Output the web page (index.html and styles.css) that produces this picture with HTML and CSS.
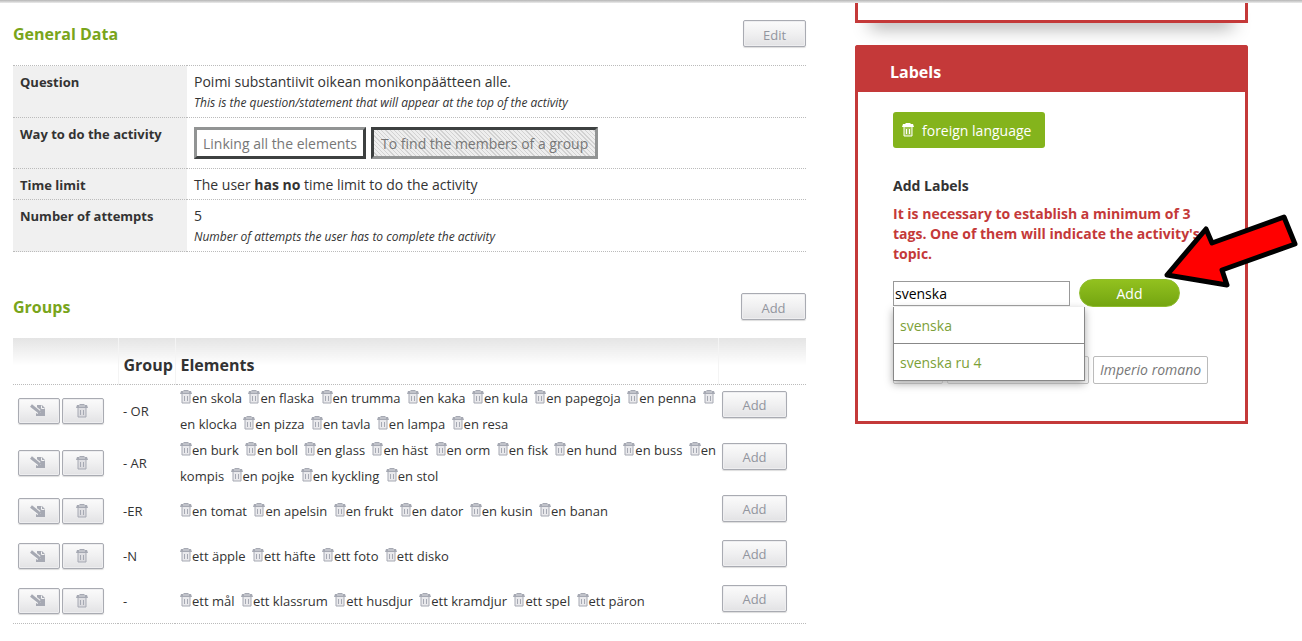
FILE: index.html
```html
<!DOCTYPE html>
<html lang="en">
<head>
  <meta charset="UTF-8">
  <meta name="viewport" content="width=device-width, initial-scale=1.0">
  <title>Activity - General Data</title>
  <link rel="stylesheet" href="styles.css">
</head>
<body>
  <!-- shared icons -->
  <svg class="sprite" aria-hidden="true">
    <symbol id="trash" viewBox="0 0 12 14">
      <path d="M2 4h8v9H2z" fill="currentColor" fill-opacity=".25"/>
      <path d="M4 0h4l1 1h2l1 3H0l1-3h2z" fill="currentColor"/>
      <path d="M3 2h6" stroke="#fff" stroke-opacity=".6" fill="none"/>
      <path d="M2 4v9h8V4M4.500 6v5M7.500 6v5" stroke="currentColor" fill="none"/>
    </symbol>
    <symbol id="edit" viewBox="0 0 16 13">
      <path d="M7 1h5l3 3v8H6V9h5L7 5z" fill="currentColor"/>
      <path d="M11.500 1.500v3h3" stroke="#f4f4f4" fill="none"/>
      <path d="M1 1.500l8 6.500" stroke="#f4f4f4" stroke-width="5" fill="none"/>
      <path d="M1 1.500l7 5.500 2 2" stroke="currentColor" stroke-width="3" fill="none"/>
    </symbol>
  </svg>

  <div class="page">
    <main>
      <section class="general">
        <div class="title">
          <h2>General Data</h2>
          <button class="btn">Edit</button>
        </div>
        <table class="data">
          <tr>
            <th scope="row">Question</th>
            <td>Poimi substantiivit oikean monikonpäätteen alle.<br>
              <em>This is the question/statement that will appear at the top of the activity</em></td>
          </tr>
          <tr>
            <th scope="row">Way to do the activity</th>
            <td class="modes"><button class="mode">Linking all the elements</button><button class="mode selected">To find the members of a group</button></td>
          </tr>
          <tr>
            <th scope="row">Time limit</th>
            <td>The user <strong>has no</strong> time limit to do the activity</td>
          </tr>
          <tr>
            <th scope="row">Number of attempts</th>
            <td>5<br>
              <em>Number of attempts the user has to complete the activity</em></td>
          </tr>
        </table>
      </section>

      <section>
        <div class="title">
          <h2>Groups</h2>
          <button class="btn wide">Add</button>
        </div>
        <table class="groups">
          <thead>
            <tr>
              <th class="col-tools"></th>
              <th class="col-group">Group</th>
              <th>Elements</th>
              <th class="col-add"></th>
            </tr>
          </thead>
          <tbody>
            <tr>
              <td><div class="tools"><button class="btn icon" aria-label="Edit"><svg class="pen"><use href="#edit"/></svg></button><button class="btn icon" aria-label="Delete"><svg class="bin"><use href="#trash"/></svg></button></div></td>
              <td class="name">- OR</td>
              <td class="elements">
                <a href="#" aria-label="Delete"><svg class="bin"><use href="#trash"/></svg></a>en skola
                <a href="#" aria-label="Delete"><svg class="bin"><use href="#trash"/></svg></a>en flaska
                <a href="#" aria-label="Delete"><svg class="bin"><use href="#trash"/></svg></a>en trumma
                <a href="#" aria-label="Delete"><svg class="bin"><use href="#trash"/></svg></a>en kaka
                <a href="#" aria-label="Delete"><svg class="bin"><use href="#trash"/></svg></a>en kula
                <a href="#" aria-label="Delete"><svg class="bin"><use href="#trash"/></svg></a>en papegoja
                <a href="#" aria-label="Delete"><svg class="bin"><use href="#trash"/></svg></a>en penna
                <a href="#" aria-label="Delete"><svg class="bin"><use href="#trash"/></svg></a><br>en klocka
                <a href="#" aria-label="Delete"><svg class="bin"><use href="#trash"/></svg></a>en pizza
                <a href="#" aria-label="Delete"><svg class="bin"><use href="#trash"/></svg></a>en tavla
                <a href="#" aria-label="Delete"><svg class="bin"><use href="#trash"/></svg></a>en lampa
                <a href="#" aria-label="Delete"><svg class="bin"><use href="#trash"/></svg></a>en resa
              </td>
              <td class="add"><button class="btn wide">Add</button></td>
            </tr>
            <tr>
              <td><div class="tools"><button class="btn icon" aria-label="Edit"><svg class="pen"><use href="#edit"/></svg></button><button class="btn icon" aria-label="Delete"><svg class="bin"><use href="#trash"/></svg></button></div></td>
              <td class="name">- AR</td>
              <td class="elements">
                <a href="#" aria-label="Delete"><svg class="bin"><use href="#trash"/></svg></a>en burk
                <a href="#" aria-label="Delete"><svg class="bin"><use href="#trash"/></svg></a>en boll
                <a href="#" aria-label="Delete"><svg class="bin"><use href="#trash"/></svg></a>en glass
                <a href="#" aria-label="Delete"><svg class="bin"><use href="#trash"/></svg></a>en häst
                <a href="#" aria-label="Delete"><svg class="bin"><use href="#trash"/></svg></a>en orm
                <a href="#" aria-label="Delete"><svg class="bin"><use href="#trash"/></svg></a>en fisk
                <a href="#" aria-label="Delete"><svg class="bin"><use href="#trash"/></svg></a>en hund
                <a href="#" aria-label="Delete"><svg class="bin"><use href="#trash"/></svg></a>en buss
                <a href="#" aria-label="Delete"><svg class="bin"><use href="#trash"/></svg></a>en<br>kompis
                <a href="#" aria-label="Delete"><svg class="bin"><use href="#trash"/></svg></a>en pojke
                <a href="#" aria-label="Delete"><svg class="bin"><use href="#trash"/></svg></a>en kyckling
                <a href="#" aria-label="Delete"><svg class="bin"><use href="#trash"/></svg></a>en stol
              </td>
              <td class="add"><button class="btn wide">Add</button></td>
            </tr>
            <tr>
              <td><div class="tools"><button class="btn icon" aria-label="Edit"><svg class="pen"><use href="#edit"/></svg></button><button class="btn icon" aria-label="Delete"><svg class="bin"><use href="#trash"/></svg></button></div></td>
              <td class="name">-ER</td>
              <td class="elements">
                <a href="#" aria-label="Delete"><svg class="bin"><use href="#trash"/></svg></a>en tomat
                <a href="#" aria-label="Delete"><svg class="bin"><use href="#trash"/></svg></a>en apelsin
                <a href="#" aria-label="Delete"><svg class="bin"><use href="#trash"/></svg></a>en frukt
                <a href="#" aria-label="Delete"><svg class="bin"><use href="#trash"/></svg></a>en dator
                <a href="#" aria-label="Delete"><svg class="bin"><use href="#trash"/></svg></a>en kusin
                <a href="#" aria-label="Delete"><svg class="bin"><use href="#trash"/></svg></a>en banan
              </td>
              <td class="add"><button class="btn wide">Add</button></td>
            </tr>
            <tr>
              <td><div class="tools"><button class="btn icon" aria-label="Edit"><svg class="pen"><use href="#edit"/></svg></button><button class="btn icon" aria-label="Delete"><svg class="bin"><use href="#trash"/></svg></button></div></td>
              <td class="name">-N</td>
              <td class="elements">
                <a href="#" aria-label="Delete"><svg class="bin"><use href="#trash"/></svg></a>ett äpple
                <a href="#" aria-label="Delete"><svg class="bin"><use href="#trash"/></svg></a>ett häfte
                <a href="#" aria-label="Delete"><svg class="bin"><use href="#trash"/></svg></a>ett foto
                <a href="#" aria-label="Delete"><svg class="bin"><use href="#trash"/></svg></a>ett disko
              </td>
              <td class="add"><button class="btn wide">Add</button></td>
            </tr>
            <tr>
              <td><div class="tools"><button class="btn icon" aria-label="Edit"><svg class="pen"><use href="#edit"/></svg></button><button class="btn icon" aria-label="Delete"><svg class="bin"><use href="#trash"/></svg></button></div></td>
              <td class="name">-</td>
              <td class="elements">
                <a href="#" aria-label="Delete"><svg class="bin"><use href="#trash"/></svg></a>ett mål
                <a href="#" aria-label="Delete"><svg class="bin"><use href="#trash"/></svg></a>ett klassrum
                <a href="#" aria-label="Delete"><svg class="bin"><use href="#trash"/></svg></a>ett husdjur
                <a href="#" aria-label="Delete"><svg class="bin"><use href="#trash"/></svg></a>ett kramdjur
                <a href="#" aria-label="Delete"><svg class="bin"><use href="#trash"/></svg></a>ett spel
                <a href="#" aria-label="Delete"><svg class="bin"><use href="#trash"/></svg></a>ett päron
              </td>
              <td class="add"><button class="btn wide">Add</button></td>
            </tr>
          </tbody>
        </table>
      </section>
    </main>

    <aside>
      <div class="previous"></div>
      <section class="labels">
        <h2>Labels</h2>
        <div class="labels-body">
          <button class="tag"><svg class="bin"><use href="#trash"/></svg>foreign language</button>
          <h3><label for="label">Add Labels</label></h3>
          <p class="warning">It is necessary to establish a minimum of 3 tags. One of them will indicate the activity's topic.</p>
          <form class="add-label">
            <input id="label" type="text" value="svenska" autocomplete="off">
            <button class="add-btn" type="button">Add</button>
            <ul class="suggestions">
              <li><a href="#">svenska</a></li>
              <li><a href="#">svenska ru 4</a></li>
            </ul>
          </form>
          <div class="examples">
            <span class="example short"></span>
            <span class="example long"></span>
            <span class="example">Imperio romano</span>
          </div>
        </div>
        <!-- arrow pointing at the Add button -->
        <svg class="arrow" viewBox="0 0 136 77" aria-hidden="true">
          <path d="M4 63L43 17l6 14 72-26 11 27-73 26 5 15z" fill="#f00" stroke="#000" stroke-width="5" stroke-linejoin="round"/>
        </svg>
      </section>
    </aside>
  </div>
</body>
</html>
```
FILE: styles.css
```css
* {
  box-sizing: border-box;
}
body {
  margin: 0;
  background: #fff;
  color: #333;
  font-family: "Open Sans", "Noto Sans", sans-serif;
  font-size: 14px;
  line-height: 20px;
}
/* shadow of the bar above */
body::before {
  content: "";
  position: absolute;
  top: 0;
  left: 0;
  right: 0;
  height: 3px;
  background: linear-gradient(#b5b5b5, #ececec);
  z-index: 2;
}
h2, h3, p, ul {
  margin: 0;
  padding: 0;
}
h2 {
  font-size: 16px;
}
button, input {
  font-family: inherit;
}
.sprite {
  display: none;
}
.bin {
  width: 12px;
  height: 14px;
}
.pen {
  width: 16px;
  height: 13px;
}

.page {
  display: grid;
  grid-template-columns: minmax(0, 1fr) 393px;
  gap: 49px;
  padding: 0 54px 0 13px;
}
main {
  padding-top: 20px;
}

/* section titles */
.title {
  display: flex;
  justify-content: space-between;
  align-items: flex-start;
  height: 45px;
}
.title h2 {
  color: #79a51b;
  line-height: 28px;
}
.general {
  margin-bottom: 41px;
}

.btn {
  min-width: 63px;
  height: 27px;
  padding: 2px 8px 0;
  border: 1px solid #a9abb2;
  border-radius: 2px;
  background: linear-gradient(#fbfbfb, #f0f0f1 50%, #e2e2e4);
  box-shadow: inset 0 0 0 1px #eeeef0, 0 1px 1px #ddd;
  color: #92959e;
  font-size: 13px;
}
.btn.wide {
  min-width: 65px;
}
.btn.icon {
  display: flex;
  justify-content: center;
  align-items: center;
  min-width: 0;
  width: 42px;
  height: 26px;
  padding: 0 2px 0 0;
  color: #a6a9b3;
}

/* tables */
table {
  width: 100%;
  border-collapse: collapse;
}
.data tr {
  border-top: 1px dotted #bbb;
  border-bottom: 1px dotted #bbb;
}
.data th {
  width: 174px;
  padding: 6px 7px 4px;
  background: #f0f0f0;
  font-size: 13px;
  text-align: left;
  vertical-align: top;
}
.data td {
  padding: 6px 7px 4px;
}
.data em {
  font-size: 12px;
}
.data .modes {
  padding: 9px 7px;
}
.mode {
  height: 32px;
  margin-right: 5px;
  padding: 0 6px;
  border: 3px solid;
  border-color: #929494 #3d4040 #3d4040 #929494;
  background: #fff;
  color: #777;
  font-size: 14px;
}
.mode.selected {
  padding: 0 7px;
  border-color: #3d4040 #929494 #929494 #3d4040;
  background: repeating-linear-gradient(45deg, #eee 0, #eee 2px, #d2d2d2 2px, #d2d2d2 3px);
}

.groups {
  table-layout: fixed;
}
.groups thead {
  border-bottom: 1px dotted #bbb;
}
.groups th {
  height: 46px;
  padding: 8px 5px 0;
  border-right: 1px solid #f4f4f4;
  background: linear-gradient(#e4e4e4, #fff 60%);
  font-size: 16px;
  text-align: left;
}
.groups th:last-child {
  border-right: 0;
}
.groups .col-tools {
  width: 105px;
}
.groups .col-group {
  width: 57px;
}
.groups .col-add {
  width: 88px;
}
.groups tbody {
  border-bottom: 1px dotted #bbb;
}
.groups tbody tr {
  height: 45px;
}
.groups td {
  padding: 0 5px;
  font-size: 13px;
  line-height: 26px;
}
.groups td.add {
  padding: 6px 4px 0;
  line-height: 20px;
  vertical-align: top;
}
.groups td.elements {
  padding-right: 0;
  white-space: nowrap;
}
.elements a {
  margin-left: 3px;
  color: #a6a9b3;
}
.elements a:first-child {
  margin-left: 0;
}
.elements .bin {
  vertical-align: -1px;
}
.tools {
  display: flex;
  gap: 2px;
}

/* right column */
.previous {
  position: relative;
  height: 23px;
  margin-bottom: 22px;
  border: 3px solid #c43939;
  border-top: 0;
  background: #fff;
}
.previous::after {
  content: "";
  position: absolute;
  z-index: -1;
  left: 12px;
  right: 12px;
  bottom: 4px;
  height: 12px;
  box-shadow: 0 11px 18px #999;
}
.labels {
  position: relative;
  border: 3px solid #c43939;
  border-top: 0;
  border-radius: 3px 3px 0 0;
}
.labels h2 {
  margin: 0 -3px;
  padding: 15px 35px 8px;
  border-radius: 3px 3px 0 0;
  background: #c43939;
  color: #fff;
  line-height: 24px;
}
.labels-body {
  padding: 20px 35px 37px;
}
.tag {
  display: flex;
  align-items: center;
  gap: 8px;
  height: 36px;
  padding: 0 14px 0 9px;
  border: 0;
  border-radius: 3px;
  background: #84b41c;
  color: #fff;
  font-size: 14px;
}
.labels h3 {
  margin: 28px 0 8px;
  font-size: 14px;
}
.warning {
  color: #c43939;
  font-weight: bold;
}
.add-label {
  position: relative;
  display: flex;
  align-items: center;
  gap: 9px;
  margin-top: 15px;
}
.add-label input {
  width: 177px;
  height: 25px;
  padding: 1px;
  border: 1px solid #999;
  color: #000;
  font-size: 14px;
}
.add-btn {
  width: 101px;
  height: 28px;
  border: 1px solid #8fbc2e;
  border-radius: 14px;
  background: linear-gradient(#92c11f, #74a511);
  color: #fff;
  font-size: 14px;
}
.suggestions {
  position: absolute;
  top: 28px;
  left: 0;
  width: 192px;
  border: 1px solid #888;
  border-top: 0;
  background: #fff;
  box-shadow: 0 3px 8px #aaa;
  list-style: none;
}
.suggestions li + li {
  border-top: 1px solid #888;
}
.suggestions a {
  display: block;
  padding: 9px 6px 7px;
  color: #7c9f38;
  text-decoration: none;
}
.examples {
  display: flex;
  gap: 4px;
  margin-top: 49px;
}
.example {
  height: 28px;
  padding: 3px 6px;
  border: 1px solid #bbb;
  border-radius: 2px;
  color: #777;
  font-style: italic;
  white-space: nowrap;
}
.example.short {
  width: 50px;
}
.example.long {
  width: 142px;
}
.arrow {
  position: absolute;
  top: 167px;
  left: 305px;
  width: 136px;
  height: 77px;
}
```
